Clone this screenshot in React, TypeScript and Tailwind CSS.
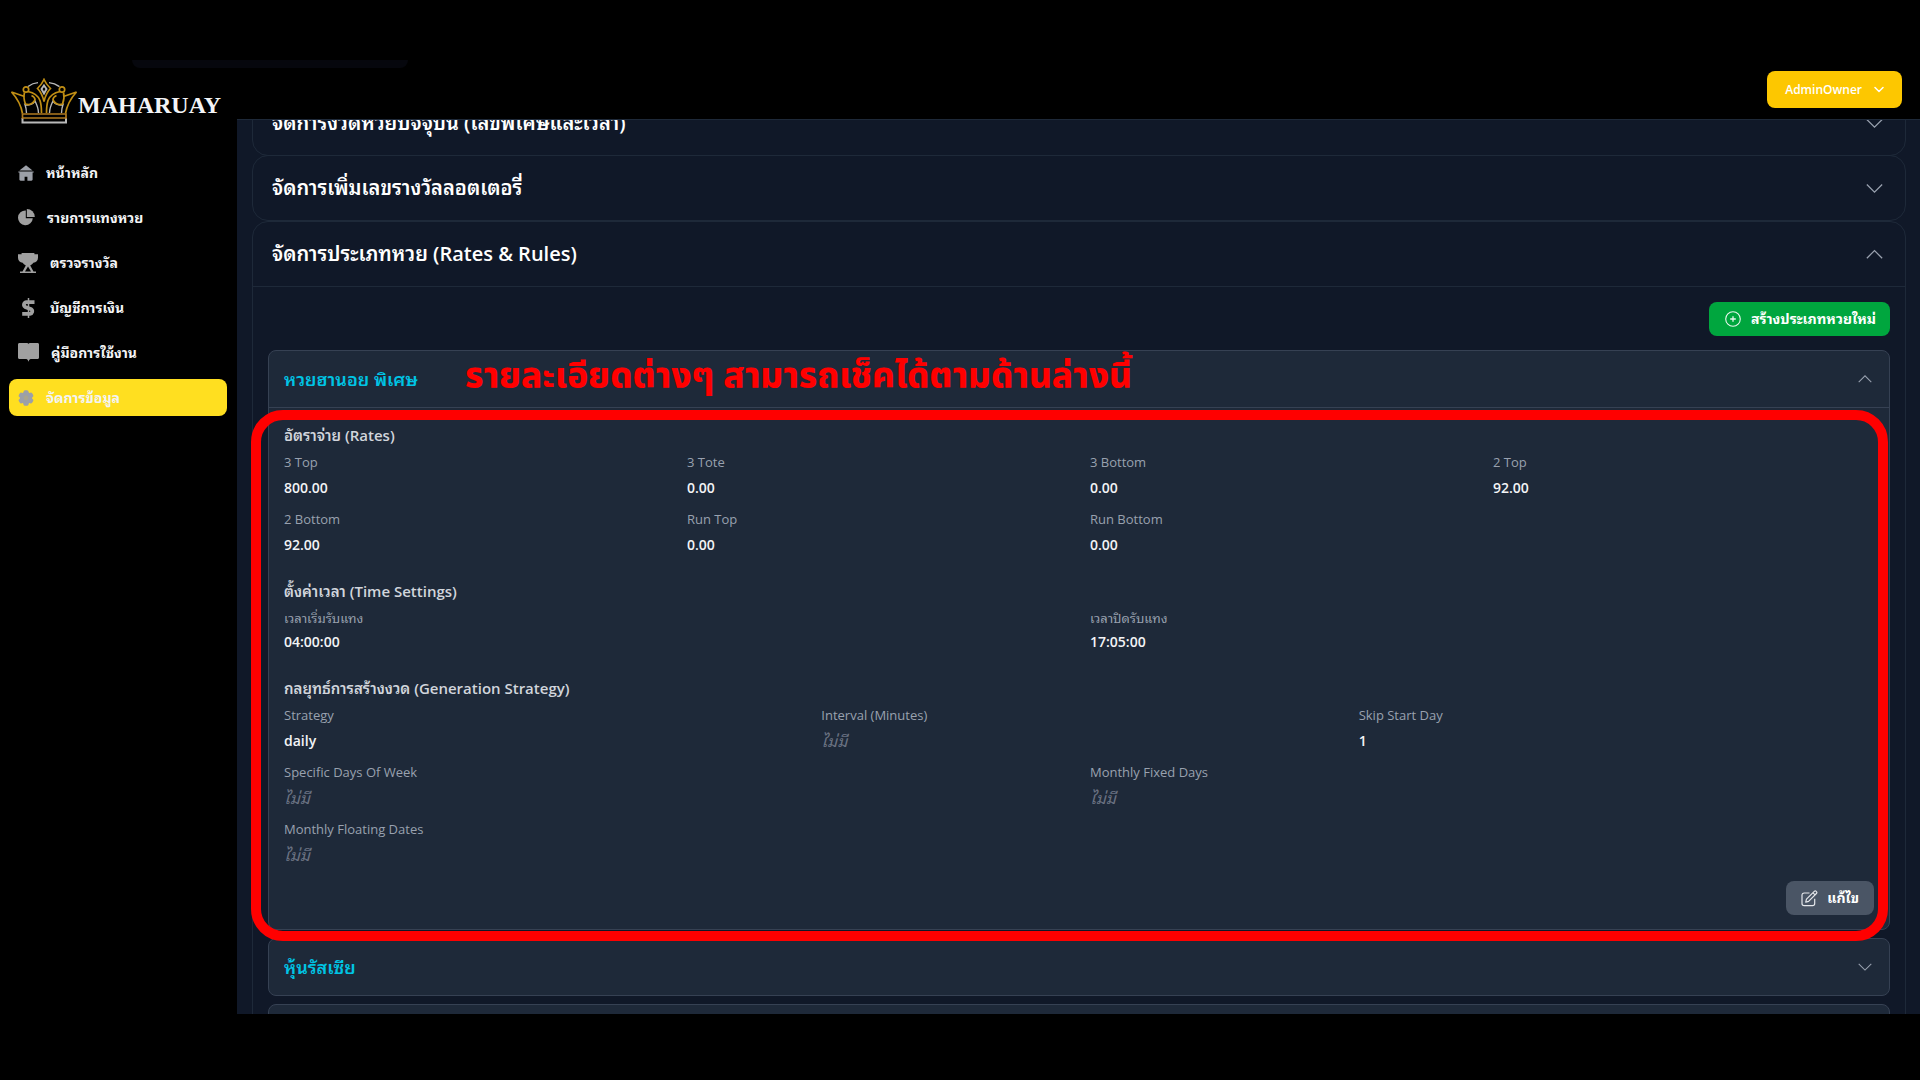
import React from "react";

const THAI_UI = "font-['Open_Sans','Noto_Sans_Thai_Looped','Loma','Noto_Sans',sans-serif]";

function HomeIcon() {
  return (
    <svg viewBox="0 0 16 16" className="h-4 w-4" fill="#9ca0a8" aria-hidden="true">
      <path d="M8 0.300 14.600 5.600H1.400Z" />
      <path d="M0.300 6.400h15.400v1.200h-1.100v6.900c0 .7-.5 1.200-1.200 1.200H9.400v-4H6.600v4H2.600c-.7 0-1.200-.5-1.200-1.200V7.600H.3Z" />
    </svg>
  );
}

function PieIcon() {
  return (
    <svg viewBox="0 0 17 17" className="h-[17px] w-[17px]" fill="#a0a0a0" aria-hidden="true">
      <path d="M7.800 1.400v7.800h7A7.400 7.400 0 1 1 7.800 1.400Z" />
      <path d="M8.800 0a8 8 0 0 1 8 8H8.800Z" />
    </svg>
  );
}

function TrophyIcon() {
  return (
    <svg viewBox="0 0 20 20" className="h-5 w-5" fill="#a0a0a0" aria-hidden="true">
      <path d="M3.600 0h12.800v1.300H20v3.400c0 3-2 4.700-4.600 5A6.500 6.500 0 0 1 12.200 12.400l3.300 6H18V20H2v-1.600h2.500l3.300-6A6.500 6.500 0 0 1 4.600 9.700C2 9.400 0 7.700 0 4.700V1.300h3.600Z" />
      <path d="M10 13.600 7 18.400h6Z" fill="#000" />
    </svg>
  );
}

function DollarIcon() {
  return (
    <svg viewBox="0 0 20 20" className="h-5 w-5" fill="none" stroke="#a0a0a0" aria-hidden="true">
      <path d="M10.500 0v20" strokeWidth="1.500" />
      <path d="M16.500 4.200H8.500a2.600 2.600 0 0 0-1.300 4.800l6 2.300a2.500 2.500 0 0 1-1.200 4.500H4.200" strokeWidth="3.800" />
    </svg>
  );
}

function BookIcon() {
  return (
    <svg viewBox="0 0 21 19" className="h-[19px] w-[21px]" fill="#a0a0a0" aria-hidden="true">
      <path d="M1.500 0h7c1 0 1.700.4 2 1 .3-.6 1-1 2-1h7c.9 0 1.500.6 1.500 1.500v13c0 .9-.6 1.500-1.500 1.500h-6c-1.400 0-2.200.5-2.500 1.500l-.5 1.300-.5-1.300c-.3-1-1.100-1.500-2.500-1.500h-6C.6 16 0 15.400 0 14.500v-13C0 .6.600 0 1.500 0Z" />
    </svg>
  );
}

function GearIcon() {
  return (
    <svg viewBox="0 0 16 16" className="h-4 w-4" aria-hidden="true">
      <g fill="#9ca0a8">
        <circle cx="8" cy="8" r="6.200" />
        <rect x="5.500" y="0.300" width="5" height="15.400" rx="1.500" />
        <rect x="5.500" y="0.300" width="5" height="15.400" rx="1.500" transform="rotate(60 8 8)" />
        <rect x="5.500" y="0.300" width="5" height="15.400" rx="1.500" transform="rotate(120 8 8)" />
      </g>
      <circle cx="8" cy="8" r="2.400" fill="#aaa58e" />
    </svg>
  );
}

function Crown() {
  return (
    <svg viewBox="0 0 68 46" className="h-[46px] w-[68px] shrink-0" fill="none" aria-hidden="true">
      <g stroke="#b9b9b9" strokeWidth="1.400">
        <path d="M18 8.500C22 5.500 25 4.800 28 4.600M39 4.600c4 .3 7 1.400 10.500 4" />
        <path d="M16.500 35c-.2-4-.6-6-1.500-8.500 4 1.500 8-.5 10-3.500 2 4 3.500 7 3.500 12M51.500 35c.2-4 .6-6 1.500-8.500-4 1.500-8-.5-10-3.500-2 4-3.500 7-3.500 12" />
        <path d="M34 7.500 36.500 11 34 15.500 31.500 11Z" strokeWidth="1.900" />
        <path d="M12.500 40v4.500h43.500V40" strokeWidth="2" />
      </g>
      <g stroke="#c08e14" strokeWidth="1.700" strokeLinejoin="miter">
        <path d="M12.500 35.500C11 27 7 20 1.500 14l13 4.500M55.500 35.500C57 27 61 20 66.500 14l-13 4.500" />
        <path d="M14.500 14.500c-1 4-.5 8 1 11.500 4 1.500 8.500-.5 9.500-4.500 0-2-1.500-3-3.500-4M53.500 14.500c1 4 .5 8-1 11.500-4 1.500-8.500-.5-9.500-4.500 0-2 1.500-3 3.500-4" />
        <circle cx="16" cy="11.500" r="2.700" />
        <circle cx="52" cy="11.500" r="2.700" />
        <path d="M18 13.500c5 1 10 4 12 9 1.300 4 1.500 8 1.500 12.500M50 13.500c-5 1-10 4-12 9-1.300 4-1.500 8-1.500 12.500" />
        <path d="M34 1.500c1.500 3.500 4 6.500 6.500 9-3 3-5 6.500-6.500 13-1.500-6.500-3.500-10-6.500-13C30 8 32.500 5 34 1.500Z" />
        <path d="M12.500 36h43.500v4H12.500Z" stroke="#b07a20" />
      </g>
    </svg>
  );
}

function Chevron({ up, small }: { up?: boolean; small?: boolean }) {
  return (
    <svg
      viewBox="0 0 16 16"
      className={small ? "h-[14px] w-[14px] shrink-0" : "h-[17px] w-[17px] shrink-0"}
      fill="none"
      stroke="#99a1af"
      strokeWidth="1.200"
      aria-hidden="true"
    >
      <path d={up ? "M0.800 11.500 8 4.300l7.200 7.200" : "M0.800 4.300 8 11.500l7.200-7.200"} />
    </svg>
  );
}

const nav = [
  { label: "หน้าหลัก", icon: <HomeIcon /> },
  { label: "รายการแทงหวย", icon: <PieIcon /> },
  { label: "ตรวจรางวัล", icon: <TrophyIcon /> },
  { label: "บัญชีการเงิน", icon: <DollarIcon /> },
  { label: "คู่มือการใช้งาน", icon: <BookIcon /> },
  { label: "จัดการข้อมูล", icon: <GearIcon />, active: true },
];

function Sidebar() {
  return (
    <aside className="w-[237px] shrink-0 bg-black">
      <a href="#" className="flex items-center pt-[18px] pl-[10px]">
        <Crown />
        <span className="pt-2 font-['Liberation_Serif',serif] text-2xl leading-7 font-bold text-gray-100">MAHARUAY</span>
      </a>
      <nav className="mt-[30px] flex flex-col gap-2 pr-[10px] pl-[9px]">
        {nav.map((n) => (
          <a
            key={n.label}
            href="#"
            className={
              "flex h-[37px] items-center gap-3 rounded-lg px-[9px] text-sm font-bold whitespace-nowrap text-gray-100 " +
              (n.active ? "bg-yellow-300" : "")
            }
          >
            {n.icon}
            <span>{n.label}</span>
          </a>
        ))}
      </nav>
    </aside>
  );
}

function Field({ label, value, tight }: { label: string; value?: string; tight?: boolean }) {
  return (
    <div>
      <dt className="text-[13px] leading-5 text-gray-400">{label}</dt>
      <dd
        className={
          (tight ? "mt-[2px] " : "mt-1 ") +
          "leading-6 " +
          (value ? "text-sm font-semibold text-gray-100" : "text-base text-[#6a7282] italic")
        }
      >
        {value ?? "ไม่มี"}
      </dd>
    </div>
  );
}

function GroupTitle({ children }: { children: React.ReactNode }) {
  return <h3 className="mb-[5px] text-[15px] leading-6 font-semibold text-gray-300">{children}</h3>;
}

function Details() {
  return (
    <div className="flex flex-col gap-[22px]">
      <section>
        <GroupTitle>อัตราจ่าย (Rates)</GroupTitle>
        <dl className="grid grid-cols-4 gap-x-[22px] gap-y-[9px]">
          <Field label="3 Top" value="800.00" />
          <Field label="3 Tote" value="0.00" />
          <Field label="3 Bottom" value="0.00" />
          <Field label="2 Top" value="92.00" />
          <Field label="2 Bottom" value="92.00" />
          <Field label="Run Top" value="0.00" />
          <Field label="Run Bottom" value="0.00" />
        </dl>
      </section>
      <section>
        <GroupTitle>ตั้งค่าเวลา (Time Settings)</GroupTitle>
        <dl className="grid grid-cols-2 gap-x-[22px]">
          <Field label="เวลาเริ่มรับแทง" value="04:00:00" tight />
          <Field label="เวลาปิดรับแทง" value="17:05:00" tight />
        </dl>
      </section>
      <section>
        <GroupTitle>กลยุทธ์การสร้างงวด (Generation Strategy)</GroupTitle>
        <div className="flex flex-col gap-[9px]">
          <dl className="grid grid-cols-3 gap-x-[22px]">
            <Field label="Strategy" value="daily" />
            <Field label="Interval (Minutes)" />
            <Field label="Skip Start Day" value="1" />
          </dl>
          <dl className="grid grid-cols-2 gap-x-[22px] gap-y-[9px]">
            <Field label="Specific Days Of Week" />
            <Field label="Monthly Fixed Days" />
            <Field label="Monthly Floating Dates" />
          </dl>
        </div>
      </section>
    </div>
  );
}

function PanelHeader({ title, open }: { title: string; open?: boolean }) {
  return (
    <button
      type="button"
      aria-expanded={!!open}
      className="flex h-16 w-full items-center justify-between pr-[22px] pl-[19px] text-left text-xl font-semibold text-white"
    >
      <span>{title}</span>
      <Chevron up={open} />
    </button>
  );
}

function TypeHeader({ title, open }: { title: string; open?: boolean }) {
  return (
    <button
      type="button"
      aria-expanded={!!open}
      className="flex h-14 w-full items-center justify-between pr-[17px] pl-[15px] text-left text-lg font-semibold text-[#00c4e4]"
    >
      <span>{title}</span>
      <Chevron up={open} small />
    </button>
  );
}

export default function App() {
  return (
    <div className={"relative flex h-screen bg-black pt-[60px] pb-[66px] " + THAI_UI}>
      <div className="absolute top-[60px] left-[132px] h-2 w-[276px] rounded-b-lg bg-[#06070d]" />
      <Sidebar />
      <div className="flex min-w-0 flex-1 flex-col">
        <header className="flex h-[60px] shrink-0 items-start justify-end border-b border-gray-800 bg-black pt-[11px] pr-[18px]">
          <button
            type="button"
            className="flex h-[37px] items-center gap-3 rounded-lg bg-yellow-400 px-[18px] text-xs font-semibold text-white"
          >
            AdminOwner
            <svg viewBox="0 0 10 10" className="h-[10px] w-[10px]" fill="none" stroke="#fff" strokeWidth="1.500" aria-hidden="true">
              <path d="M1 2.500 5 6.500l4-4" strokeLinecap="round" strokeLinejoin="round" />
            </svg>
          </button>
        </header>
        <main className="min-h-0 flex-1 overflow-hidden bg-gray-900 pr-[14px] pl-[15px]">
          <div className="-mt-[30px]">
            <section className="rounded-2xl border border-gray-800">
              <PanelHeader title="จัดการงวดหวยปัจจุบัน (เลขพิเศษและเวลา)" />
            </section>
            <section className="-mt-px rounded-2xl border border-gray-800">
              <PanelHeader title="จัดการเพิ่มเลขรางวัลลอตเตอรี่" />
            </section>
            <section className="rounded-2xl border border-gray-800">
              <PanelHeader title="จัดการประเภทหวย (Rates & Rules)" open />
              <div className="border-t border-gray-800 px-[15px] pt-[15px]">
                <div className="flex justify-end">
                  <button
                    type="button"
                    className="flex h-[34px] items-center gap-[10px] rounded-lg bg-green-600 pr-[14px] pl-4 text-sm font-bold text-white"
                  >
                    <svg viewBox="0 0 16 16" className="h-4 w-4" fill="none" stroke="#e9f7ee" aria-hidden="true">
                      <circle cx="8" cy="8" r="7.300" strokeWidth="1.100" />
                      <path d="M8 5.200v5.600M5.200 8h5.600" strokeWidth="1.300" />
                    </svg>
                    สร้างประเภทหวยใหม่
                  </button>
                </div>
                <div className="mt-[14px] flex flex-col gap-2">
                  <article className="relative rounded-lg border border-gray-700 bg-gray-800">
                    <TypeHeader title="หวยฮานอย พิเศษ" open />
                    <p className="pointer-events-none absolute top-0 left-[196px] font-['Noto_Sans_Thai','Noto_Sans',sans-serif] text-[35px] leading-[54px] font-extrabold whitespace-nowrap text-[#ff0000]">
                      รายละเอียดต่างๆ สามารถเช็คได้ตามด้านล่างนี้
                    </p>
                    <div className="border-t border-gray-700 px-[15px] pt-[15px] pb-[14px]">
                      <Details />
                      <div className="mt-[14px] flex justify-end">
                        <button
                          type="button"
                          className="flex h-[34px] items-center gap-[9px] rounded-lg bg-gray-600 px-[15px] text-sm font-bold text-white"
                        >
                          <svg viewBox="0 0 17 17" className="h-[17px] w-[17px]" fill="none" stroke="#e5e7eb" strokeWidth="1.200" strokeLinejoin="round" aria-hidden="true">
                            <path d="M8.500 3H3.200C1.800 3 1 3.800 1 5.200v8.300c0 1.400.8 2.200 2.200 2.200h8.300c1.400 0 2.200-.8 2.200-2.200V8.800" />
                            <path d="M5.500 9.200 13.300 1.400c.6-.6 1.300-.6 1.900 0l.2.200c.6.600.6 1.300 0 1.900L7.600 11.300l-2.900.8Z" />
                            <path d="m12 2.800 2.100 2.100" />
                          </svg>
                          แก้ไข
                        </button>
                      </div>
                    </div>
                    <div className="pointer-events-none absolute top-[59px] right-px -bottom-3 -left-[18px] rounded-[32px] border-[10px] border-[#ff0000]" />
                  </article>
                  <article className="rounded-lg border border-gray-700 bg-gray-800">
                    <TypeHeader title="หุ้นรัสเซีย" />
                  </article>
                  <article className="h-14 rounded-lg border border-gray-700 bg-gray-800" />
                </div>
              </div>
            </section>
          </div>
        </main>
      </div>
    </div>
  );
}
